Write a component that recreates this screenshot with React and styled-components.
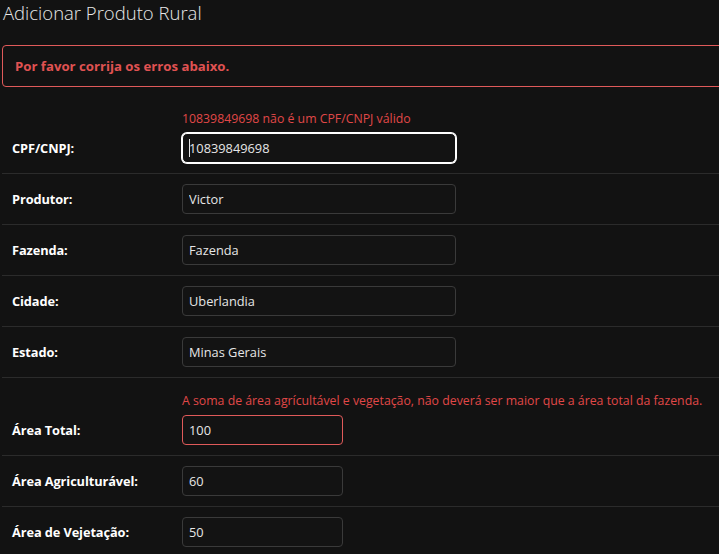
import React from "react";
import styled, { createGlobalStyle } from "styled-components";

const GlobalStyle = createGlobalStyle`
  html, body {
    margin: 0;
    padding: 0;
    background: #121212;
    overflow: hidden;
  }
  body {
    font-family: "Open Sans", "Noto Sans", sans-serif;
    color: #e6e6e6;
  }
`;

const fields = [
  { label: "CPF/CNPJ:", value: "10839849698", error: "10839849698 não é um CPF/CNPJ válido", focused: true },
  { label: "Produtor:", value: "Victor" },
  { label: "Fazenda:", value: "Fazenda" },
  { label: "Cidade:", value: "Uberlandia" },
  { label: "Estado:", value: "Minas Gerais" },
  {
    label: "Área Total:",
    value: "100",
    small: true,
    invalid: true,
    error: "A soma de área agrícultável e vegetação, não deverá ser maior que a área total da fazenda.",
  },
  { label: "Área Agriculturável:", value: "60", small: true },
  { label: "Área de Vejetação:", value: "50", small: true },
];

const App = () => {
  return (
    <React.Fragment>
      <GlobalStyle />
      <Page>
        <Title>Adicionar Produto Rural</Title>
        <Alert>Por favor corrija os erros abaixo.</Alert>
        <Form>
          {fields.map((f) => (
            <Row key={f.label}>
              <Label>{f.label}</Label>
              <Field>
                {f.error && <ErrorText>{f.error}</ErrorText>}
                <InputWrap>
                  <Input
                    readOnly
                    defaultValue={f.value}
                    $small={f.small}
                    $focused={f.focused}
                    $invalid={f.invalid}
                  />
                  {f.focused && <Caret />}
                </InputWrap>
              </Field>
            </Row>
          ))}
        </Form>
      </Page>
    </React.Fragment>
  );
};

const Page = styled.div`
  width: 760px;
  padding: 0 2px;
`;

const Title = styled.h1`
  margin: 0 0 19px 1px;
  font-size: 18.5px;
  font-weight: 300;
  line-height: 26px;
  color: #e8e8e8;
`;

const Alert = styled.div`
  border: 1px solid #e05a5a;
  border-radius: 4px;
  padding: 12px 12px;
  font-size: 13.2px;
  font-weight: 700;
  line-height: 16px;
  color: #e05252;
  margin-bottom: 9px;
`;

const Form = styled.div`
  display: flex;
  flex-direction: column;
`;

const Row = styled.div`
  display: grid;
  grid-template-columns: 170px 1fr;
  padding: 10px 0;
  border-top: 1px solid #2b2b2b;
  &:first-child {
    border-top: none;
  }
`;

const Label = styled.div`
  align-self: end;
  height: 30px;
  display: flex;
  align-items: center;
  padding-left: 10px;
  font-size: 12.8px;
  font-weight: 700;
  letter-spacing: -0.1px;
  color: #ffffff;
`;

const Field = styled.div`
  display: flex;
  flex-direction: column;
  padding-left: 10px;
`;

const ErrorText = styled.div`
  font-size: 12.3px;
  line-height: 18px;
  margin: 4px 0 5px;
  color: #e04848;
  white-space: nowrap;
`;

const InputWrap = styled.div`
  position: relative;
  width: fit-content;
`;

const Input = styled.input`
  box-sizing: border-box;
  width: ${(p) => (p.$small ? "161px" : "274px")};
  height: 30px;
  padding: 0 6px;
  background: #131313;
  border: 1px solid ${(p) => (p.$focused ? "#ffffff" : p.$invalid ? "#e05a5a" : "#3a3a3a")};
  border-radius: ${(p) => (p.$focused ? "5px" : "4px")};
  box-shadow: ${(p) => (p.$focused ? "0 0 0 1px #ffffff" : "none")};
  font-family: "Open Sans", "Noto Sans", sans-serif;
  font-size: 12.8px;
  color: #e6e6e6;
  outline: none;
`;

const Caret = styled.span`
  position: absolute;
  left: 7px;
  top: 6px;
  width: 1px;
  height: 18px;
  background: #e6e6e6;
`;

export default App;
